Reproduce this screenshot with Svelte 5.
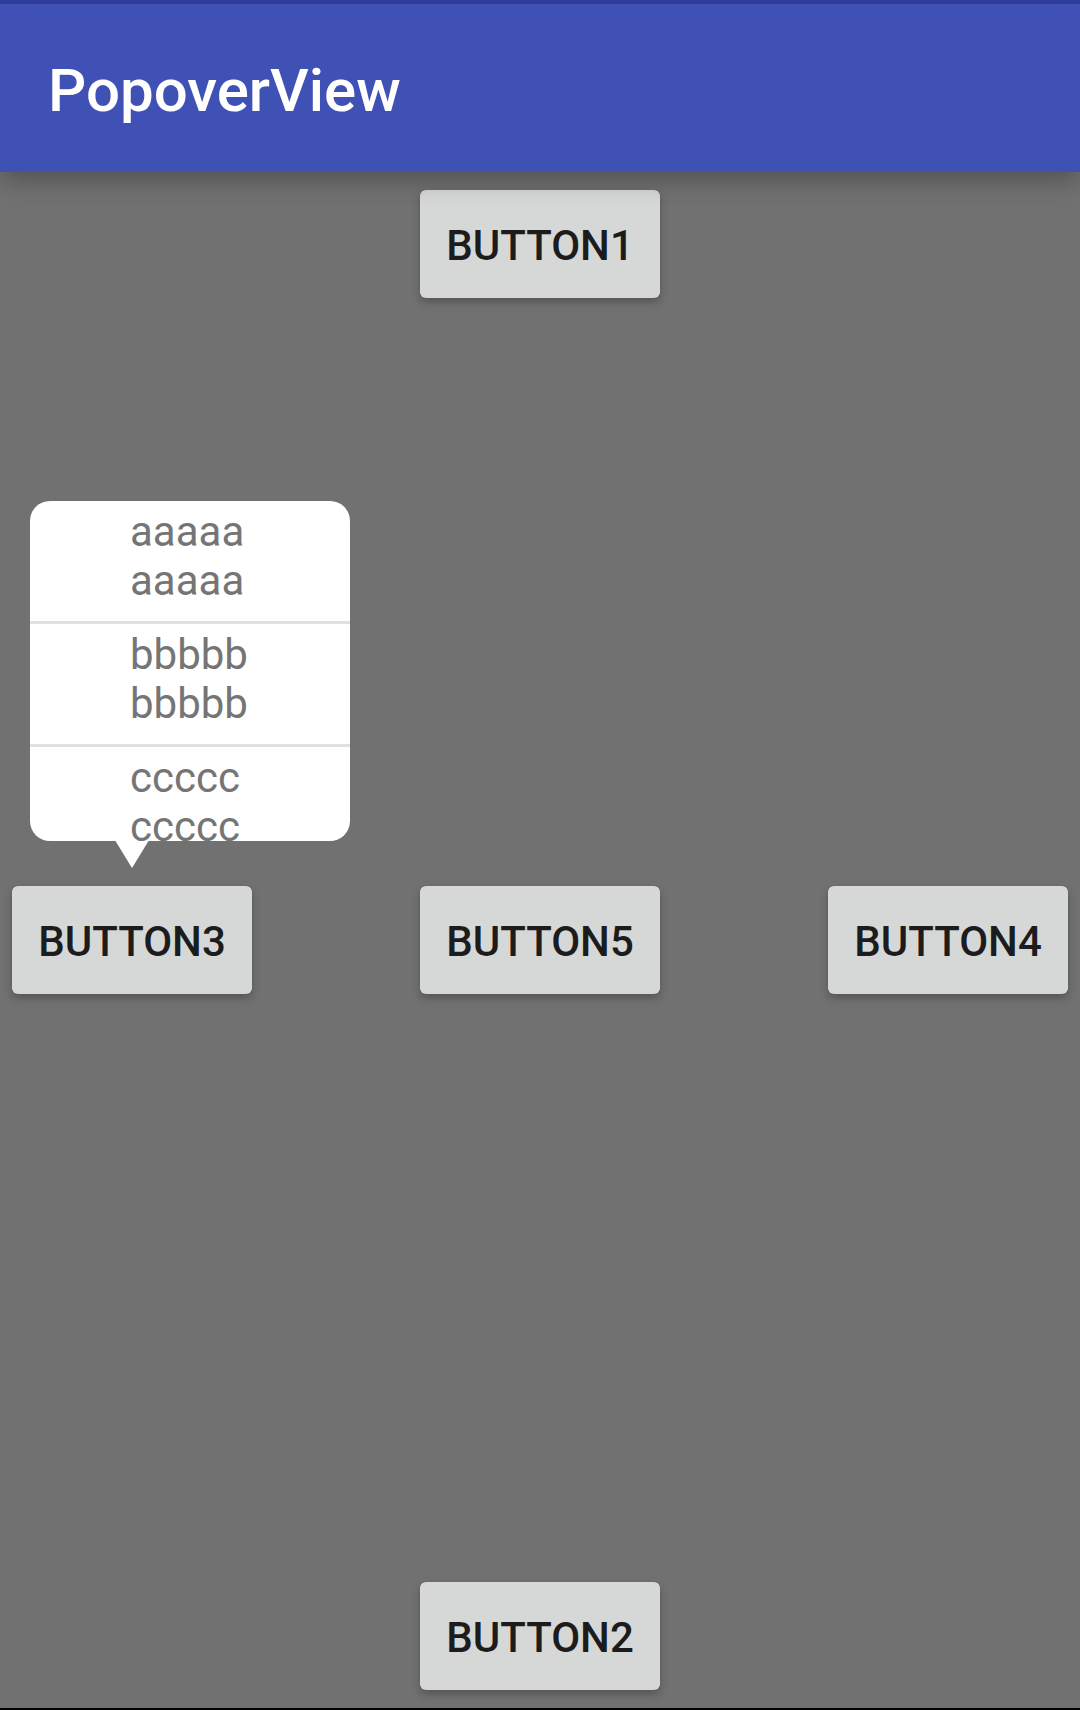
<script>
  const items = ['aaaaa', 'bbbbb', 'ccccc'];
  let open = $state(true);
</script>

<div class="screen">
  <header class="bar">
    <h1>PopoverView</h1>
  </header>

  <main>
    <button class="btn top" type="button">BUTTON1</button>

    <div class="anchor">
      <button class="btn" type="button" aria-expanded={open} onclick={() => (open = !open)}>BUTTON3</button>
      {#if open}
        <div class="popover">
          <ul>
            {#each items as item}
              <li>{item}<br />{item}</li>
            {/each}
          </ul>
          <svg class="arrow" viewBox="0 0 34 27" aria-hidden="true">
            <path d="M0.500 0H33.500L17 27Z" fill="#fff" />
          </svg>
        </div>
      {/if}
    </div>

    <button class="btn center" type="button">BUTTON5</button>
    <button class="btn right" type="button">BUTTON4</button>
    <button class="btn bottom" type="button">BUTTON2</button>
  </main>
</div>

<style>
  :global(body) {
    margin: 0;
    background: #717171;
  }

  .screen {
    box-sizing: border-box;
    display: flex;
    flex-direction: column;
    min-height: 100vh;
    border-top: 4px solid #303f9f;
    border-bottom: 2px solid #000;
    background: #717171;
    font-family: Roboto, 'Liberation Sans', sans-serif;
  }

  .bar {
    position: relative;
    z-index: 1;
    box-sizing: border-box;
    display: flex;
    align-items: center;
    min-height: 168px;
    padding: 6px 48px 0;
    background: #3f51b5;
    box-shadow: 0 10px 24px -2px rgba(0, 0, 0, 0.28);
  }

  h1 {
    margin: 0;
    color: #fff;
    font-size: 60px;
    font-weight: 500;
    line-height: 70px;
  }

  main {
    flex: 1;
    display: grid;
    grid-template-columns: 1fr auto 1fr;
    grid-template-rows: 1fr auto 1fr;
    padding: 18px 12px;
  }

  .btn {
    box-sizing: border-box;
    display: block;
    min-width: 240px;
    min-height: 108px;
    padding: 4px 24px 0;
    border: 0;
    border-radius: 6px;
    background: #d6d8d7;
    box-shadow: 0 4px 8px rgba(0, 0, 0, 0.26);
    color: #1c1c1c;
    font: 500 42px/50px Roboto, 'Liberation Sans', sans-serif;
    cursor: pointer;
  }

  .top {
    grid-area: 1 / 2;
    align-self: start;
  }

  .anchor {
    position: relative;
    grid-area: 2 / 1;
    justify-self: start;
  }

  .center {
    grid-area: 2 / 2;
  }

  .right {
    grid-area: 2 / 3;
    justify-self: end;
  }

  .bottom {
    grid-area: 3 / 2;
    align-self: end;
  }

  .popover {
    position: absolute;
    bottom: calc(100% + 18px);
    left: 18px;
    width: 320px;
  }

  ul {
    height: 340px;
    margin: 0;
    padding: 0;
    overflow: hidden;
    border-radius: 20px;
    background: #fff;
    color: #757575;
    font-size: 42px;
    line-height: 49px;
    list-style: none;
  }

  li {
    box-sizing: border-box;
    min-height: 120px;
    padding: 6px 0 0 100px;
  }

  li + li {
    border-top: 3px solid #e0e0e0;
    min-height: 123px;
  }

  .arrow {
    display: block;
    width: 34px;
    height: 27px;
    margin-left: 85px;
  }
</style>
